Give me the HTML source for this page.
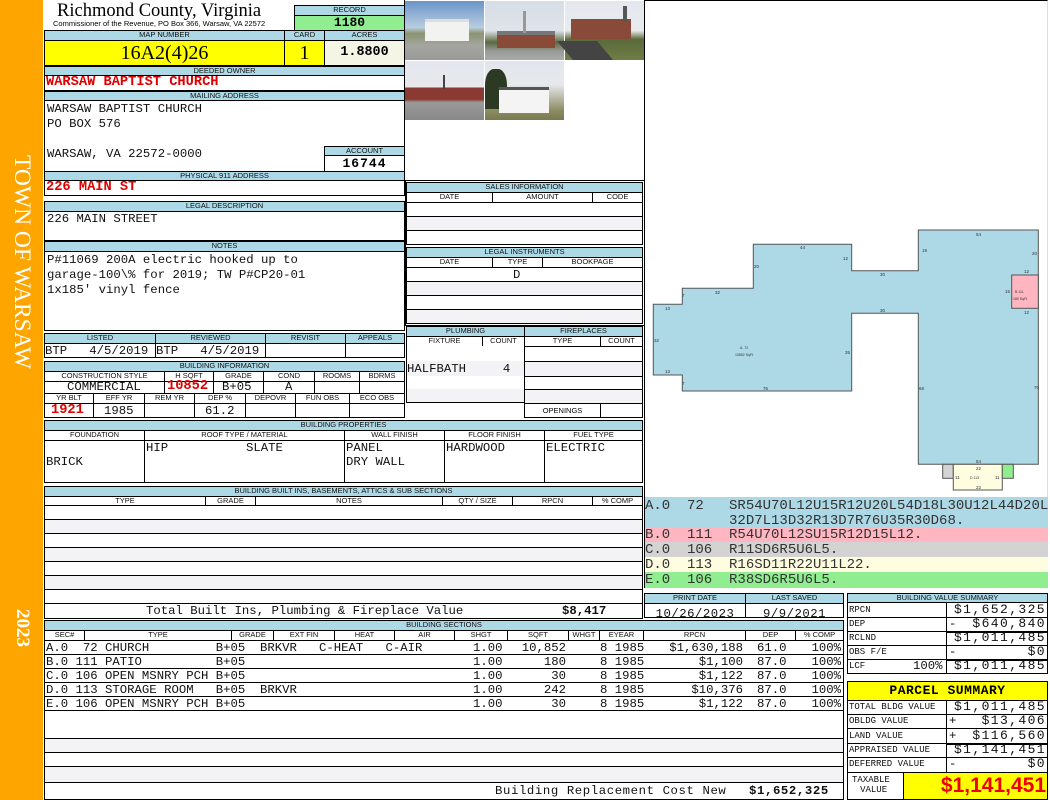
<!DOCTYPE html>
<html><head><meta charset="utf-8"><style>
*{margin:0;padding:0}
body{width:1050px;height:800px;position:relative;background:#fff;overflow:hidden;font-family:"Liberation Sans",sans-serif}
.a{position:absolute;box-sizing:border-box}
.h{position:absolute;box-sizing:border-box;background:#add8e6;border:1px solid #000;font:7.5px "Liberation Sans",sans-serif;text-align:center;line-height:8px;color:#111;white-space:nowrap;overflow:hidden}
.w{position:absolute;box-sizing:border-box;background:#fff;border:1px solid #000}
.m{font-family:"Liberation Mono",monospace;font-size:12.3px;white-space:pre;color:#111}
.t{position:absolute;font-family:"Liberation Mono",monospace;font-size:12.3px;white-space:pre;color:#111;line-height:14px}
.r{color:#d00;font-weight:bold;font-size:13.7px}
.g{background:#f3f3f6}
.sm{position:absolute;font-family:"Liberation Mono",monospace;font-size:9px;white-space:pre;color:#111;line-height:14px}
.v{position:absolute;font-family:"Liberation Mono",monospace;font-size:13px;letter-spacing:1.4px;white-space:pre;color:#111;line-height:14px;text-align:right}
</style></head><body>

<!-- sidebar -->
<div class="a" style="left:0;top:0;width:43px;height:800px;background:#ffa500"></div>
<div class="a" style="left:22px;top:262px;width:0;height:0"><div style="position:absolute;left-:0;left:-125px;top:-13px;width:250px;text-align:center;transform:rotate(90deg);font:23.5px 'Liberation Serif',serif;color:#fff;white-space:nowrap;line-height:26px">TOWN OF WARSAW</div></div>
<div class="a" style="left:22px;top:628px;width:0;height:0"><div style="position:absolute;left:-30px;top:-11px;width:60px;text-align:center;transform:rotate(90deg);font:bold 19px 'Liberation Serif',serif;color:#fff;line-height:22px">2023</div></div>

<!-- title -->
<div class="a" style="left:57px;top:1px;font:18.5px 'Liberation Serif',serif;color:#000;white-space:nowrap">Richmond County, Virginia</div>
<div class="a" style="left:53px;top:19px;font:7.5px 'Liberation Sans',sans-serif;color:#000;white-space:nowrap">Commissioner of the Revenue, PO Box 366, Warsaw, VA 22572</div>
<div class="h" style="left:294px;top:5px;width:111px;height:11px">RECORD</div>
<div class="w" style="left:294px;top:15px;width:111px;height:16px;background:#90ee90;text-align:center;font:bold 13px 'Liberation Mono',monospace;line-height:14px">1180</div>

<div class="h" style="left:44px;top:30px;width:241px;height:11px">MAP NUMBER</div>
<div class="h" style="left:284px;top:30px;width:41px;height:11px">CARD</div>
<div class="h" style="left:324px;top:30px;width:81px;height:11px">ACRES</div>
<div class="w" style="left:44px;top:40px;width:241px;height:26px;background:#ffff00;text-align:center;font:20px 'Liberation Serif',serif;line-height:24px">16A2(4)26</div>
<div class="w" style="left:284px;top:40px;width:41px;height:26px;background:#ffff00;text-align:center;font:20px 'Liberation Serif',serif;line-height:24px">1</div>
<div class="w" style="left:324px;top:40px;width:81px;height:26px;background:#f5f5e6;text-align:center;font:bold 13.4px 'Liberation Mono',monospace;line-height:24px">1.8800</div>

<div class="h" style="left:44px;top:66px;width:361px;height:10px">DEEDED OWNER</div>
<div class="w" style="left:44px;top:75px;width:361px;height:16px"></div>
<div class="t r" style="left:46px;top:76px">WARSAW BAPTIST CHURCH</div>
<div class="h" style="left:44px;top:91px;width:361px;height:10px">MAILING ADDRESS</div>
<div class="w" style="left:44px;top:100px;width:361px;height:72px"></div>
<div class="t" style="left:47px;top:102px">WARSAW BAPTIST CHURCH</div>
<div class="t" style="left:47px;top:117px">PO BOX 576</div>
<div class="t" style="left:47px;top:147px">WARSAW, VA 22572-0000</div>
<div class="h" style="left:324px;top:146px;width:81px;height:10px">ACCOUNT</div>
<div class="w" style="left:324px;top:155px;width:81px;height:17px;text-align:center;font:bold 13px 'Liberation Mono',monospace;line-height:15px;letter-spacing:1px">16744</div>
<div class="h" style="left:44px;top:171px;width:361px;height:10px">PHYSICAL 911 ADDRESS</div>
<div class="w" style="left:44px;top:180px;width:361px;height:16px"></div>
<div class="t r" style="left:46px;top:181px">226 MAIN ST</div>

<div class="h" style="left:44px;top:201px;width:361px;height:11px">LEGAL DESCRIPTION</div>
<div class="w" style="left:44px;top:211px;width:361px;height:30px"></div>
<div class="t" style="left:47px;top:212px">226 MAIN STREET</div>
<div class="h" style="left:44px;top:241px;width:361px;height:11px">NOTES</div>
<div class="w" style="left:44px;top:251px;width:361px;height:80px"></div>
<div class="t" style="left:47px;top:253px;line-height:15px">P#11069 200A electric hooked up to
garage-100\% for 2019; TW P#CP20-01
1x185' vinyl fence</div>

<!-- listed -->
<div class="h" style="left:44px;top:333px;width:112px;height:11px">LISTED</div>
<div class="h" style="left:155px;top:333px;width:111px;height:11px">REVIEWED</div>
<div class="h" style="left:265px;top:333px;width:81px;height:11px">REVISIT</div>
<div class="h" style="left:345px;top:333px;width:60px;height:11px">APPEALS</div>
<div class="w" style="left:44px;top:343px;width:112px;height:15px"></div>
<div class="w" style="left:155px;top:343px;width:111px;height:15px"></div>
<div class="w" style="left:265px;top:343px;width:81px;height:15px"></div>
<div class="w" style="left:345px;top:343px;width:60px;height:15px"></div>
<div class="t" style="left:45px;top:344px">BTP   4/5/2019</div>
<div class="t" style="left:156px;top:344px">BTP   4/5/2019</div>

<!-- building info -->
<div class="h" style="left:44px;top:361px;width:361px;height:11px">BUILDING INFORMATION</div>
<div class="h" style="left:44px;top:371px;width:121px;height:11px;background:#fff">CONSTRUCTION STYLE</div>
<div class="h" style="left:164px;top:371px;width:50px;height:11px;background:#fff">H SQFT</div>
<div class="h" style="left:213px;top:371px;width:51px;height:11px;background:#fff">GRADE</div>
<div class="h" style="left:263px;top:371px;width:52px;height:11px;background:#fff">COND</div>
<div class="h" style="left:314px;top:371px;width:46px;height:11px;background:#fff">ROOMS</div>
<div class="h" style="left:359px;top:371px;width:46px;height:11px;background:#fff">BDRMS</div>
<div class="w" style="left:44px;top:381px;width:121px;height:13px"></div>
<div class="w" style="left:164px;top:381px;width:50px;height:13px"></div>
<div class="w" style="left:213px;top:381px;width:51px;height:13px"></div>
<div class="w" style="left:263px;top:381px;width:52px;height:13px"></div>
<div class="w" style="left:314px;top:381px;width:46px;height:13px"></div>
<div class="w" style="left:359px;top:381px;width:46px;height:13px"></div>
<div class="t" style="left:67px;top:380px">COMMERCIAL</div>
<div class="t r" style="left:167px;top:380px">10852</div>
<div class="t" style="left:222px;top:380px">B+05</div>
<div class="t" style="left:285px;top:380px">A</div>
<div class="h" style="left:44px;top:393px;width:50px;height:11px;background:#fff">YR BLT</div>
<div class="h" style="left:93px;top:393px;width:52px;height:11px;background:#fff">EFF YR</div>
<div class="h" style="left:144px;top:393px;width:51px;height:11px;background:#fff">REM YR</div>
<div class="h" style="left:194px;top:393px;width:52px;height:11px;background:#fff">DEP %</div>
<div class="h" style="left:245px;top:393px;width:51px;height:11px;background:#fff">DEPOVR</div>
<div class="h" style="left:295px;top:393px;width:55px;height:11px;background:#fff">FUN OBS</div>
<div class="h" style="left:349px;top:393px;width:56px;height:11px;background:#fff">ECO OBS</div>
<div class="w" style="left:44px;top:403px;width:50px;height:15px"></div>
<div class="w" style="left:93px;top:403px;width:52px;height:15px"></div>
<div class="w" style="left:144px;top:403px;width:51px;height:15px"></div>
<div class="w" style="left:194px;top:403px;width:52px;height:15px"></div>
<div class="w" style="left:245px;top:403px;width:51px;height:15px"></div>
<div class="w" style="left:295px;top:403px;width:55px;height:15px"></div>
<div class="w" style="left:349px;top:403px;width:56px;height:15px"></div>
<div class="t r" style="left:51px;top:404px">1921</div>
<div class="t" style="left:104px;top:404px">1985</div>
<div class="t" style="left:205px;top:404px">61.2</div>

<!-- photos frame -->
<div class="a" style="left:404px;top:0;width:242px;height:182px;border-left:1px solid #000"></div>
<div class="a" style="left:405px;top:1px;width:79px;height:59px;background:linear-gradient(#6b94c8 0,#b9cde0 45%,#8a9470 55%,#a5a5a0 75%,#9a9a98 100%)"><div class="a" style="left:20px;top:18px;width:44px;height:22px;background:#f2f2f0;border-top:3px solid #ddd"></div></div>
<div class="a" style="left:485px;top:1px;width:79px;height:59px;background:linear-gradient(#d6dde6 0,#e0e4ea 50%,#5a6a40 70%,#9a9a98 85%,#aaa 100%)"><div class="a" style="left:12px;top:30px;width:58px;height:17px;background:#8a4a38;border-top:4px solid #777"></div><div class="a" style="left:38px;top:10px;width:3px;height:22px;background:#999"></div></div>
<div class="a" style="left:565px;top:1px;width:79px;height:59px;background:linear-gradient(#e4e8ee 0,#e8eaee 50%,#5a6a3a 65%,#6f7d45 100%)"><div class="a" style="left:6px;top:18px;width:60px;height:20px;background:#8a4a3a"></div><div class="a" style="left:58px;top:5px;width:4px;height:16px;background:#555"></div><div class="a" style="left:0;top:40px;width:40px;height:19px;background:#444;transform:skewX(40deg)"></div></div>
<div class="a" style="left:405px;top:61px;width:79px;height:59px;background:linear-gradient(#e4e8ee 0,#e6e8ec 45%,#8a3a30 45%,#8a3a30 65%,#9a9a9a 70%,#888 100%)"><div class="a" style="left:38px;top:14px;width:2px;height:14px;background:#444"></div></div>
<div class="a" style="left:485px;top:61px;width:79px;height:59px;background:linear-gradient(#e2e6ec 0,#e6e8ec 40%,#8a8a60 85%,#7a7a50 100%)"><div class="a" style="left:0;top:8px;width:22px;height:40px;background:#2c3a24;border-radius:40% 40% 0 0"></div><div class="a" style="left:14px;top:26px;width:50px;height:26px;background:#f4f4f4;border-top:3px solid #555"></div></div>

<!-- right frame -->
<div class="a" style="left:644px;top:0;width:404px;height:497px;border-left:1px solid #000;border-top:1px solid #000;border-right:1px solid #ddd"></div>

<!-- sales -->
<div class="w" style="left:405px;top:180px;width:240px;height:146px;border-color:#000"></div>
<div class="h" style="left:406px;top:182px;width:237px;height:11px">SALES INFORMATION</div>
<div class="h" style="left:406px;top:192px;width:87px;height:11px;background:#fff">DATE</div>
<div class="h" style="left:492px;top:192px;width:101px;height:11px;background:#fff">AMOUNT</div>
<div class="h" style="left:592px;top:192px;width:51px;height:11px;background:#fff">CODE</div>
<div class="w" style="left:406px;top:202px;width:237px;height:15px"></div>
<div class="w g" style="left:406px;top:216px;width:237px;height:15px"></div>
<div class="w" style="left:406px;top:230px;width:237px;height:15px"></div>
<div class="h" style="left:406px;top:247px;width:237px;height:11px">LEGAL INSTRUMENTS</div>
<div class="h" style="left:406px;top:257px;width:87px;height:11px;background:#fff">DATE</div>
<div class="h" style="left:492px;top:257px;width:51px;height:11px;background:#fff">TYPE</div>
<div class="h" style="left:542px;top:257px;width:101px;height:11px;background:#fff">BOOKPAGE</div>
<div class="w" style="left:406px;top:267px;width:237px;height:15px"></div>
<div class="w g" style="left:406px;top:281px;width:237px;height:15px"></div>
<div class="w" style="left:406px;top:295px;width:237px;height:15px"></div>
<div class="w g" style="left:406px;top:309px;width:237px;height:15px"></div>
<div class="t" style="left:513px;top:268px">D</div>

<!-- plumbing -->
<div class="h" style="left:406px;top:326px;width:119px;height:11px">PLUMBING</div>
<div class="h" style="left:524px;top:326px;width:119px;height:11px">FIREPLACES</div>
<div class="h" style="left:406px;top:336px;width:77px;height:11px;background:#fff">FIXTURE</div>
<div class="h" style="left:482px;top:336px;width:43px;height:11px;background:#fff">COUNT</div>
<div class="h" style="left:524px;top:336px;width:77px;height:11px;background:#fff">TYPE</div>
<div class="h" style="left:600px;top:336px;width:43px;height:11px;background:#fff">COUNT</div>
<div class="w" style="left:406px;top:346px;width:119px;height:16px;border-width:0 1px 1px 1px"></div>
<div class="w g" style="left:406px;top:361px;width:119px;height:16px;border-width:0 1px 1px 1px"></div>
<div class="w" style="left:406px;top:376px;width:119px;height:14px;border-width:0 1px 1px 1px"></div>
<div class="w g" style="left:406px;top:389px;width:119px;height:14px;border-width:0 1px 1px 1px"></div>
<div class="w" style="left:524px;top:346px;width:119px;height:16px"></div>
<div class="w g" style="left:524px;top:361px;width:119px;height:16px"></div>
<div class="w" style="left:524px;top:376px;width:119px;height:14px"></div>
<div class="w g" style="left:524px;top:389px;width:119px;height:15px"></div>
<div class="w" style="left:524px;top:403px;width:77px;height:15px;font:7.5px 'Liberation Sans',sans-serif;text-align:center;line-height:13px">OPENINGS</div>
<div class="w" style="left:600px;top:403px;width:43px;height:15px"></div>
<div class="t" style="left:407px;top:362px">HALFBATH     4</div>

<!-- building properties -->
<div class="h" style="left:44px;top:420px;width:599px;height:11px">BUILDING PROPERTIES</div>
<div class="h" style="left:44px;top:430px;width:101px;height:11px;background:#fff">FOUNDATION</div>
<div class="h" style="left:144px;top:430px;width:201px;height:11px;background:#fff">ROOF TYPE / MATERIAL</div>
<div class="h" style="left:344px;top:430px;width:101px;height:11px;background:#fff">WALL FINISH</div>
<div class="h" style="left:444px;top:430px;width:101px;height:11px;background:#fff">FLOOR FINISH</div>
<div class="h" style="left:544px;top:430px;width:99px;height:11px;background:#fff">FUEL TYPE</div>
<div class="w" style="left:44px;top:440px;width:101px;height:43px"></div>
<div class="w" style="left:144px;top:440px;width:201px;height:43px"></div>
<div class="w" style="left:344px;top:440px;width:101px;height:43px"></div>
<div class="w" style="left:444px;top:440px;width:101px;height:43px"></div>
<div class="w" style="left:544px;top:440px;width:99px;height:43px"></div>
<div class="t" style="left:46px;top:455px">BRICK</div>
<div class="t" style="left:146px;top:441px">HIP</div>
<div class="t" style="left:246px;top:441px">SLATE</div>
<div class="t" style="left:346px;top:441px">PANEL
DRY WALL</div>
<div class="t" style="left:446px;top:441px">HARDWOOD</div>
<div class="t" style="left:546px;top:441px">ELECTRIC</div>

<!-- built ins -->
<div class="h" style="left:44px;top:486px;width:599px;height:11px">BUILDING BUILT INS, BASEMENTS, ATTICS &amp; SUB SECTIONS</div>
<div class="h" style="left:44px;top:496px;width:162px;height:10px;background:#fff">TYPE</div>
<div class="h" style="left:205px;top:496px;width:51px;height:10px;background:#fff">GRADE</div>
<div class="h" style="left:255px;top:496px;width:188px;height:10px;background:#fff">NOTES</div>
<div class="h" style="left:442px;top:496px;width:71px;height:10px;background:#fff">QTY / SIZE</div>
<div class="h" style="left:512px;top:496px;width:81px;height:10px;background:#fff">RPCN</div>
<div class="h" style="left:592px;top:496px;width:51px;height:10px;background:#fff">% COMP</div>
<div class="w" style="left:44px;top:505px;width:599px;height:15px"></div>
<div class="w g" style="left:44px;top:519px;width:599px;height:15px"></div>
<div class="w" style="left:44px;top:533px;width:599px;height:15px"></div>
<div class="w g" style="left:44px;top:547px;width:599px;height:15px"></div>
<div class="w" style="left:44px;top:561px;width:599px;height:15px"></div>
<div class="w g" style="left:44px;top:575px;width:599px;height:15px"></div>
<div class="w" style="left:44px;top:589px;width:599px;height:15px"></div>
<div class="w" style="left:44px;top:603px;width:599px;height:16px"></div>
<div class="t" style="left:146px;top:604px">Total Built Ins, Plumbing &amp; Fireplace Value</div>
<div class="t" style="left:562px;top:604px;font-weight:bold">$8,417</div>

<!-- sketch -->
<svg class="a" style="left:645px;top:220px" width="405" height="275" viewBox="645 220 405 275">
<polygon points="918.3,230 1038.3,230 1038.3,464.3 918.3,464.3 918.3,313.3 851.7,313.3 851.7,391 682.3,391 682.3,375 653.3,375 653.3,304.3 682.3,304.3 682.3,288.3 753.3,288.3 753.3,244.3 851.7,244.3 851.7,270.7 918.3,270.7" fill="#add8e6" stroke="#555" stroke-width="1"/>
<rect x="1011.7" y="275" width="26.6" height="33.3" fill="#ffb6c1" stroke="#555"/>
<rect x="942.7" y="464.3" width="10.6" height="14" fill="#d3d3d3" stroke="#555"/>
<rect x="953.3" y="464.3" width="49" height="25.7" fill="#fffde0" stroke="#555"/>
<rect x="1002.3" y="464.3" width="11" height="14" fill="#90ee90" stroke="#555"/>
<g font-family="Liberation Sans" font-size="4.5" fill="#333">
<text x="976" y="236">54</text><text x="1032" y="255">20</text><text x="922" y="252">19</text><text x="843" y="260">12</text><text x="880" y="276">30</text><text x="800" y="249">44</text><text x="754" y="268">20</text><text x="715" y="294">32</text><text x="682" y="297">7</text><text x="665" y="310">13</text><text x="654" y="342">32</text><text x="665" y="373">13</text><text x="682" y="385">7</text><text x="763" y="390">76</text><text x="845" y="354">35</text><text x="880" y="312">30</text><text x="919" y="390">68</text><text x="1034" y="389">70</text><text x="1024" y="273">12</text><text x="1024" y="314">12</text><text x="1005" y="293">15</text><text x="1015" y="293" font-size="3.5">B 111</text><text x="1013" y="300" font-size="3.5">180 SqFt</text><text x="740" y="349" font-size="3.5">A. 72</text><text x="735" y="356" font-size="3.5">10852 SqFt</text><text x="976" y="463">54</text><text x="976" y="470">22</text><text x="976" y="489">22</text><text x="955" y="479">11</text><text x="995" y="479">11</text><text x="970" y="479" font-size="3.5">D 113</text>
</g>
</svg>

<!-- sketch codes -->
<div class="a" style="left:644px;top:497px;width:404px;height:31px;background:#add8e6;border-left:1px solid #000"></div>
<div class="a" style="left:644px;top:527px;width:404px;height:15px;background:#ffb6c1;border-left:1px solid #000"></div>
<div class="a" style="left:644px;top:542px;width:404px;height:15px;background:#d3d3d3;border-left:1px solid #000"></div>
<div class="a" style="left:644px;top:557px;width:404px;height:15px;background:#fffde0;border-left:1px solid #000"></div>
<div class="a" style="left:644px;top:572px;width:404px;height:16px;background:#90ee90;border-left:1px solid #000"></div>
<div class="t" style="left:645px;top:499px;font-size:14px;line-height:15px;color:#333">A.0  72   SR54U70L12U15R12U20L54D18L30U12L44D20L
          32D7L13D32R13D7R76U35R30D68.</div>
<div class="t" style="left:645px;top:528px;font-size:14px;line-height:15px;color:#333">B.0  111  R54U70L12SU15R12D15L12.</div>
<div class="t" style="left:645px;top:543px;font-size:14px;line-height:15px;color:#333">C.0  106  R11SD6R5U6L5.</div>
<div class="t" style="left:645px;top:558px;font-size:14px;line-height:15px;color:#333">D.0  113  R16SD11R22U11L22.</div>
<div class="t" style="left:645px;top:573px;font-size:14px;line-height:15px;color:#333">E.0  106  R38SD6R5U6L5.</div>

<!-- print date -->
<div class="h" style="left:644px;top:593px;width:102px;height:11px">PRINT DATE</div>
<div class="h" style="left:745px;top:593px;width:99px;height:11px">LAST SAVED</div>
<div class="w" style="left:644px;top:603px;width:102px;height:15px;text-align:center"><span class="m" style="line-height:13px;letter-spacing:.5px">10/26/2023</span></div>
<div class="w" style="left:745px;top:603px;width:99px;height:15px;text-align:center"><span class="m" style="line-height:13px;letter-spacing:.5px">9/9/2021</span></div>

<!-- building sections -->
<div class="h" style="left:44px;top:620px;width:800px;height:11px">BUILDING SECTIONS</div>
<div class="a" style="left:44px;top:630px;width:800px;height:11px;border:1px solid #000;background:#fff"></div>
<div class="h" style="left:44px;top:630px;width:41px;height:11px;background:#fff">SEC#</div>
<div class="h" style="left:84px;top:630px;width:148px;height:11px;background:#fff">TYPE</div>
<div class="h" style="left:231px;top:630px;width:43px;height:11px;background:#fff">GRADE</div>
<div class="h" style="left:273px;top:630px;width:62px;height:11px;background:#fff">EXT FIN</div>
<div class="h" style="left:334px;top:630px;width:61px;height:11px;background:#fff">HEAT</div>
<div class="h" style="left:394px;top:630px;width:61px;height:11px;background:#fff">AIR</div>
<div class="h" style="left:454px;top:630px;width:54px;height:11px;background:#fff">SHGT</div>
<div class="h" style="left:507px;top:630px;width:62px;height:11px;background:#fff">SQFT</div>
<div class="h" style="left:568px;top:630px;width:32px;height:11px;background:#fff">WHGT</div>
<div class="h" style="left:599px;top:630px;width:45px;height:11px;background:#fff">EYEAR</div>
<div class="h" style="left:643px;top:630px;width:103px;height:11px;background:#fff">RPCN</div>
<div class="h" style="left:745px;top:630px;width:51px;height:11px;background:#fff">DEP</div>
<div class="h" style="left:795px;top:630px;width:49px;height:11px;background:#fff">% COMP</div>
<div class="w" style="left:44px;top:640px;width:800px;height:15px"></div>
<div class="w" style="left:44px;top:654px;width:800px;height:15px"></div>
<div class="w" style="left:44px;top:668px;width:800px;height:15px"></div>
<div class="w" style="left:44px;top:682px;width:800px;height:15px"></div>
<div class="w" style="left:44px;top:696px;width:800px;height:15px"></div>
<div class="w" style="left:44px;top:710px;width:800px;height:29px"></div>
<div class="w g" style="left:44px;top:738px;width:800px;height:15px"></div>
<div class="w" style="left:44px;top:752px;width:800px;height:15px"></div>
<div class="w g" style="left:44px;top:766px;width:800px;height:17px"></div>
<div class="w" style="left:44px;top:782px;width:800px;height:18px"></div>
<div class="t" style="left:46px;top:641px">A.0  72 CHURCH         B+05  BRKVR   C-HEAT   C-AIR</div>
<div class="t" style="left:46px;top:655px">B.0 111 PATIO          B+05</div>
<div class="t" style="left:46px;top:669px">C.0 106 OPEN MSNRY PCH B+05</div>
<div class="t" style="left:46px;top:683px">D.0 113 STORAGE ROOM   B+05  BRKVR</div>
<div class="t" style="left:46px;top:697px">E.0 106 OPEN MSNRY PCH B+05</div>
<div class="t" style="left:473px;top:641px;line-height:14px">1.00
1.00
1.00
1.00
1.00</div>
<div class="t" style="left:508px;top:641px;width:58px;text-align:right;line-height:14px">10,852
180
30
242
30</div>
<div class="t" style="left:600px;top:641px;line-height:14px">8 1985
8 1985
8 1985
8 1985
8 1985</div>
<div class="t" style="left:643px;top:641px;width:100px;text-align:right;line-height:14px">$1,630,188
$1,100
$1,122
$10,376
$1,122</div>
<div class="t" style="left:757px;top:641px;line-height:14px">61.0
87.0
87.0
87.0
87.0</div>
<div class="t" style="left:798px;top:641px;width:43px;text-align:right;line-height:14px">100%
100%
100%
100%
100%</div>
<div class="t" style="left:495px;top:784px;letter-spacing:.6px">Building Replacement Cost New</div>
<div class="t" style="left:749px;top:784px;font-weight:bold;letter-spacing:.6px">$1,652,325</div>

<!-- building value summary -->
<div class="h" style="left:847px;top:593px;width:201px;height:10px">BUILDING VALUE SUMMARY</div>
<div class="w" style="left:847px;top:602px;width:100px;height:16px"></div><div class="w" style="left:946px;top:602px;width:102px;height:16px"></div>
<div class="w" style="left:847px;top:617px;width:100px;height:15px"></div><div class="w" style="left:946px;top:617px;width:102px;height:15px"></div>
<div class="w" style="left:847px;top:631px;width:100px;height:15px"></div><div class="w" style="left:946px;top:631px;width:102px;height:15px;border-top:2px solid #000"></div>
<div class="w" style="left:847px;top:645px;width:100px;height:15px"></div><div class="w" style="left:946px;top:645px;width:102px;height:15px"></div>
<div class="w" style="left:847px;top:659px;width:100px;height:15px"></div><div class="w" style="left:946px;top:659px;width:102px;height:15px;border-top:2px solid #000"></div>
<div class="sm" style="left:849px;top:603px">RPCN</div>
<div class="sm" style="left:849px;top:617px">DEP</div>
<div class="sm" style="left:849px;top:631px">RCLND</div>
<div class="sm" style="left:849px;top:645px">OBS F/E</div>
<div class="sm" style="left:849px;top:659px">LCF</div>
<div class="t" style="left:913px;top:659px">100%</div>
<div class="t" style="left:949px;top:617px">-</div>
<div class="t" style="left:949px;top:645px">-</div>
<div class="v" style="left:946px;top:603px;width:100px">$1,652,325</div>
<div class="v" style="left:946px;top:617px;width:100px">$640,840</div>
<div class="v" style="left:946px;top:631px;width:100px">$1,011,485</div>
<div class="v" style="left:946px;top:645px;width:100px">$0</div>
<div class="v" style="left:946px;top:659px;width:100px">$1,011,485</div>

<!-- parcel summary -->
<div class="w" style="left:847px;top:681px;width:201px;height:20px;background:#ffff00;text-align:center;font:bold 13px 'Liberation Mono',monospace;line-height:18px;letter-spacing:.5px">PARCEL SUMMARY</div>
<div class="w" style="left:847px;top:700px;width:100px;height:15px"></div><div class="w" style="left:946px;top:700px;width:102px;height:15px"></div>
<div class="w" style="left:847px;top:714px;width:100px;height:15px"></div><div class="w" style="left:946px;top:714px;width:102px;height:15px"></div>
<div class="w" style="left:847px;top:728px;width:100px;height:16px"></div><div class="w" style="left:946px;top:728px;width:102px;height:16px"></div>
<div class="w" style="left:847px;top:743px;width:100px;height:15px"></div><div class="w" style="left:946px;top:743px;width:102px;height:15px;border-top:2px solid #000"></div>
<div class="w" style="left:847px;top:757px;width:100px;height:16px"></div><div class="w" style="left:946px;top:757px;width:102px;height:16px"></div>
<div class="w" style="left:847px;top:772px;width:57px;height:28px"></div>
<div class="w" style="left:903px;top:772px;width:145px;height:28px;background:#ffff00"></div>
<div class="sm" style="left:849px;top:700px">TOTAL BLDG VALUE</div>
<div class="sm" style="left:849px;top:714px">OBLDG VALUE</div>
<div class="sm" style="left:849px;top:729px">LAND VALUE</div>
<div class="sm" style="left:849px;top:743px">APPRAISED VALUE</div>
<div class="sm" style="left:849px;top:757px">DEFERRED VALUE</div>
<div class="sm" style="left:852px;top:775px;line-height:10px;text-align:center">TAXABLE
 VALUE</div>
<div class="t" style="left:949px;top:714px">+</div>
<div class="t" style="left:949px;top:729px">+</div>
<div class="t" style="left:949px;top:757px">-</div>
<div class="v" style="left:946px;top:700px;width:100px">$1,011,485</div>
<div class="v" style="left:946px;top:714px;width:100px">$13,406</div>
<div class="v" style="left:946px;top:729px;width:100px">$116,560</div>
<div class="v" style="left:946px;top:743px;width:100px">$1,141,451</div>
<div class="v" style="left:946px;top:757px;width:100px">$0</div>
<div class="a" style="left:903px;top:773px;width:143px;text-align:right;font:bold 21px 'Liberation Sans',sans-serif;color:#e00;line-height:26px">$1,141,451</div>

</body></html>
